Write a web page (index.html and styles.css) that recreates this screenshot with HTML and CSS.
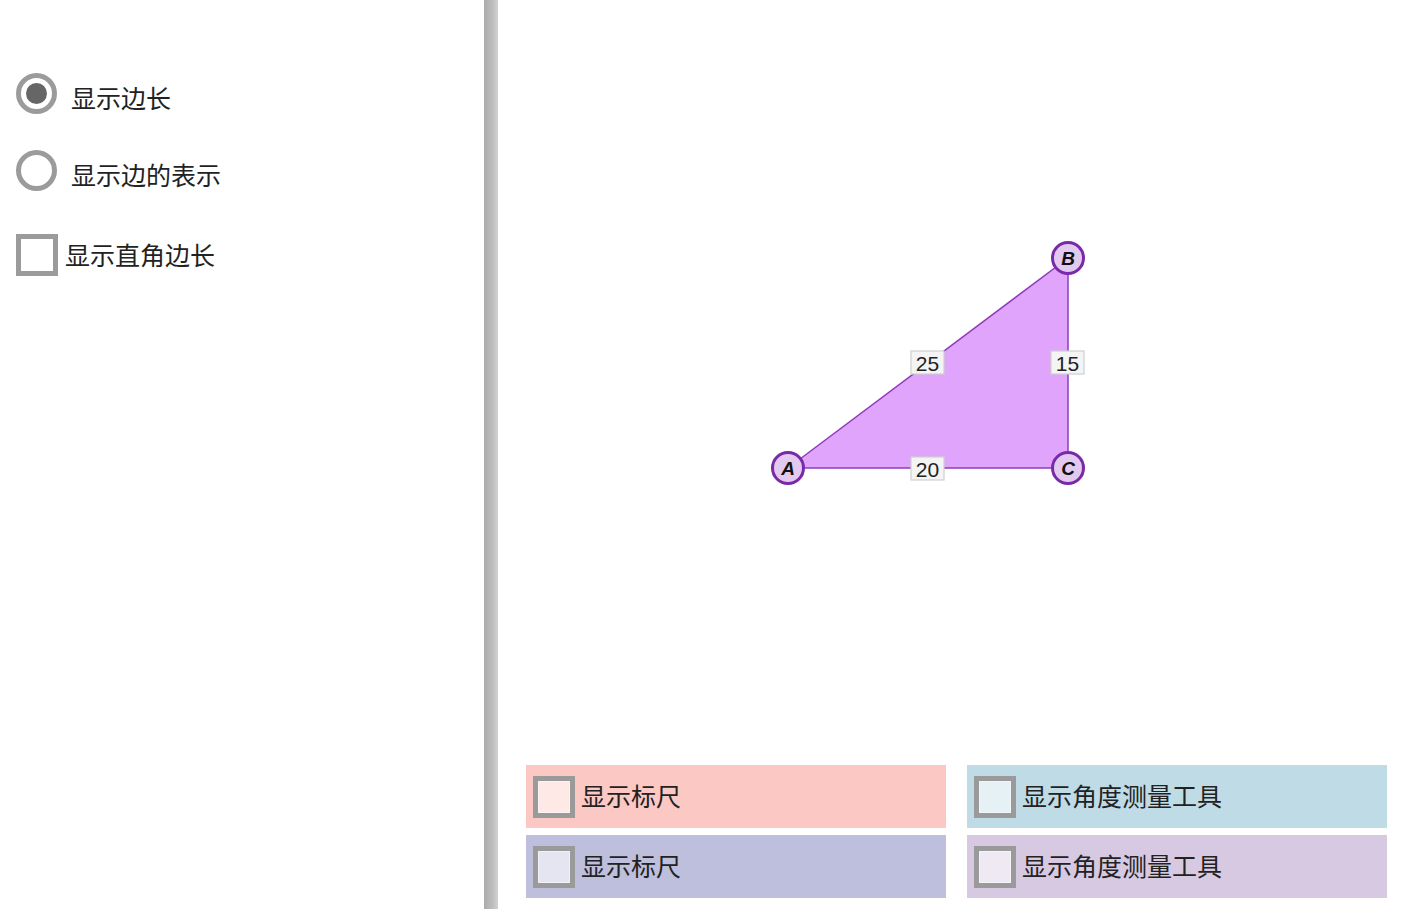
FILE: index.html
```html
<!DOCTYPE html>
<html lang="zh">
<head>
<meta charset="utf-8">
<title>直角三角形</title>
<link rel="stylesheet" href="styles.css">
</head>
<body>
<div class="app">
  <aside class="side">
    <label class="opt opt-radio">
      <span class="radio checked"><span class="dot"></span></span>
      <span class="opt-text">显示边长</span>
    </label>
    <label class="opt opt-radio">
      <span class="radio"></span>
      <span class="opt-text">显示边的表示</span>
    </label>
    <label class="opt opt-check">
      <span class="check"></span>
      <span class="opt-text">显示直角边长</span>
    </label>
  </aside>
  <div class="divider"></div>
  <main class="stage">
    <svg class="canvas" width="905" height="765" viewBox="0 0 905 765" xmlns="http://www.w3.org/2000/svg">
      <polygon points="290,468 570,258 570,468" fill="#e0a4fc" stroke="#8e3cba" stroke-width="1.5" stroke-linejoin="round"/>
      <g class="edge-label">
        <rect x="413" y="351" width="33" height="23" fill="#f4f4f4" stroke="#cfcfcf" stroke-width="1.2"/>
        <text x="429.5" y="370.5" text-anchor="middle">25</text>
        <rect x="553" y="351" width="33" height="23" fill="#f4f4f4" stroke="#cfcfcf" stroke-width="1.2"/>
        <text x="569.5" y="370.5" text-anchor="middle">15</text>
        <rect x="413" y="457" width="33" height="23" fill="#f4f4f4" stroke="#cfcfcf" stroke-width="1.2"/>
        <text x="429.5" y="476.5" text-anchor="middle">20</text>
      </g>
      <g class="vertex">
        <circle cx="290" cy="468" r="15.5" fill="#e2c9f0" stroke="#7a2aa8" stroke-width="3"/>
        <text x="290" y="474.5" text-anchor="middle">A</text>
        <circle cx="570" cy="258" r="15.5" fill="#e2c9f0" stroke="#7a2aa8" stroke-width="3"/>
        <text x="570" y="264.5" text-anchor="middle">B</text>
        <circle cx="570" cy="468" r="15.5" fill="#e2c9f0" stroke="#7a2aa8" stroke-width="3"/>
        <text x="570" y="474.5" text-anchor="middle">C</text>
      </g>
    </svg>
    <div class="tools">
      <label class="tool tool-pink"><span class="tbox"></span><span class="tool-text">显示标尺</span></label>
      <label class="tool tool-cyan"><span class="tbox"></span><span class="tool-text">显示角度测量工具</span></label>
      <label class="tool tool-blue"><span class="tbox"></span><span class="tool-text">显示标尺</span></label>
      <label class="tool tool-lilac"><span class="tbox"></span><span class="tool-text">显示角度测量工具</span></label>
    </div>
  </main>
</div>
</body>
</html>
```
FILE: styles.css
```css
html, body {
  margin: 0;
  padding: 0;
  background: #ffffff;
}
body {
  font-family: "Noto Sans CJK SC", "Liberation Sans", sans-serif;
  color: #222;
}
.app {
  display: flex;
  width: 1403px;
  height: 909px;
  overflow: hidden;
}
.side {
  width: 484px;
  flex: none;
  display: flex;
  flex-direction: column;
  padding: 73px 0 0 16px;
  box-sizing: border-box;
}
.opt {
  display: flex;
  align-items: center;
}
.opt-radio + .opt-radio {
  margin-top: 36px;
}
.opt-check {
  margin-top: 43px;
}
.radio {
  width: 41px;
  height: 41px;
  border: 5px solid #9b9b9b;
  border-radius: 50%;
  box-sizing: border-box;
  display: flex;
  align-items: center;
  justify-content: center;
  background: #fff;
}
.radio .dot {
  width: 21px;
  height: 21px;
  border-radius: 50%;
  background: #666666;
}
.check {
  width: 42px;
  height: 42px;
  border: 5px solid #9b9b9b;
  box-sizing: border-box;
  background: #fff;
}
.opt-text {
  font-size: 25px;
  line-height: 30px;
  letter-spacing: 0;
}
.opt-radio .opt-text {
  margin-left: 14px;
  padding-top: 6px;
}
.opt-check .opt-text {
  margin-left: 7px;
  margin-top: -2px;
}
.divider {
  width: 14px;
  flex: none;
  background: linear-gradient(to right, #ababab 0%, #bdbdbd 60%, #d2d2d2 100%);
}
.stage {
  flex: 1;
  display: flex;
  flex-direction: column;
}
.canvas {
  display: block;
  flex: none;
}
.edge-label text {
  font-family: "Liberation Sans", Arial, sans-serif;
  font-size: 21px;
  fill: #222;
}
.vertex text {
  font-family: "Liberation Sans", Arial, sans-serif;
  font-size: 19px;
  font-weight: bold;
  font-style: italic;
  fill: #111;
}
.tools {
  display: grid;
  grid-template-columns: 420px 420px;
  column-gap: 21px;
  row-gap: 7px;
  padding-left: 28px;
}
.tool {
  height: 63px;
  display: flex;
  align-items: center;
  padding-left: 7px;
  box-sizing: border-box;
}
.tbox {
  width: 42px;
  height: 42px;
  border: 5px solid #9a9a9a;
  box-sizing: border-box;
  background: rgba(255, 255, 255, 0.6);
  box-shadow: inset 0 0 0 1px rgba(255, 255, 255, 0.45);
  flex: none;
}
.tool-text {
  margin-left: 6px;
  margin-top: -3px;
  font-size: 25px;
  line-height: 30px;
  color: #222;
}
.tool-pink { background: #fcc8c4; }
.tool-cyan { background: #bedbe6; }
.tool-blue { background: #bebedd; }
.tool-lilac { background: #d8c9e3; }
```
